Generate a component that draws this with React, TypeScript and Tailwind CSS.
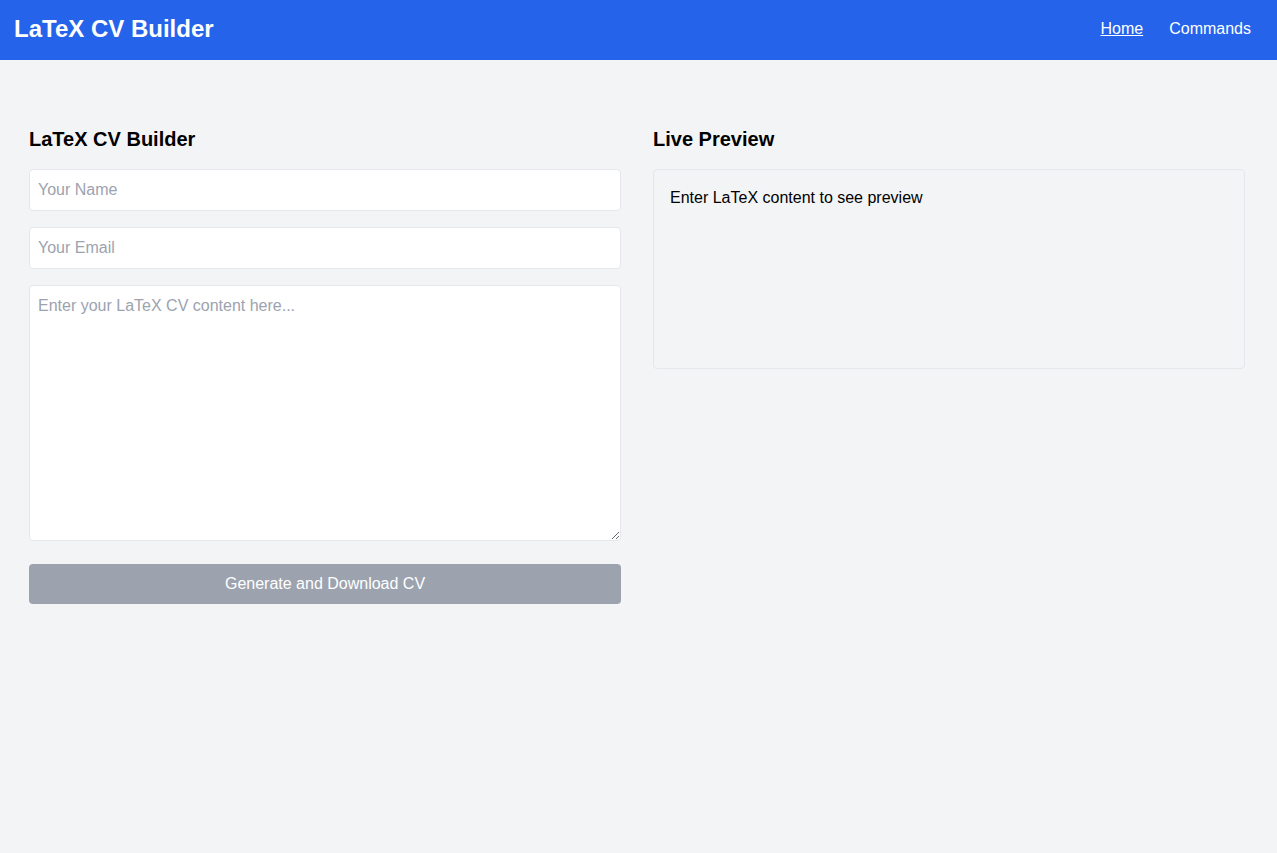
import React, { useState } from 'react';

const App: React.FC = () => {
  const [name, setName] = useState('');
  const [email, setEmail] = useState('');
  const [content, setContent] = useState('');

  const canSubmit = name.trim() && email.trim() && content.trim();

  return (
    <div className="min-h-[853px] bg-[#f3f4f6] font-['Liberation_Sans',Arial,sans-serif]">
      <nav className="h-[60px] bg-[#2563eb] pl-[14px] pr-[26px] pb-[2px] flex items-center justify-between text-white">
        <h1 className="text-2xl font-bold">LaTeX CV Builder</h1>
        <div className="flex items-center gap-[26px]">
          <a href="#" className="underline">Home</a>
          <a href="#">Commands</a>
        </div>
      </nav>

      <main className="pt-[65px] pl-[29px] pr-8 grid grid-cols-2 gap-8">
        <div>
          <h2 className="text-xl font-bold mb-4">LaTeX CV Builder</h2>
          <input
            type="text"
            value={name}
            onChange={(e) => setName(e.target.value)}
            placeholder="Your Name"
            className="block w-full bg-white border border-[#e5e7eb] rounded px-2 py-2 placeholder-[#9ca3af] focus:outline-none"
          />
          <input
            type="email"
            value={email}
            onChange={(e) => setEmail(e.target.value)}
            placeholder="Your Email"
            className="block w-full mt-4 bg-white border border-[#e5e7eb] rounded px-2 py-2 placeholder-[#9ca3af] focus:outline-none"
          />
          <textarea
            value={content}
            onChange={(e) => setContent(e.target.value)}
            placeholder="Enter your LaTeX CV content here..."
            className="block w-full h-[256px] mt-4 bg-white border border-[#e5e7eb] rounded px-2 py-2 placeholder-[#9ca3af] focus:outline-none"
          />
          <button
            disabled={!canSubmit}
            className="block w-full mt-[23px] h-10 rounded bg-[#9ca3af] text-white disabled:cursor-not-allowed"
          >
            Generate and Download CV
          </button>
        </div>

        <div>
          <h2 className="text-xl font-bold mb-4">Live Preview</h2>
          <div className="h-[200px] border border-[#e5e7eb] rounded p-4">
            {content.trim() ? (
              <pre className="whitespace-pre-wrap">{content}</pre>
            ) : (
              <p>Enter LaTeX content to see preview</p>
            )}
          </div>
        </div>
      </main>
    </div>
  );
};

export default App;
